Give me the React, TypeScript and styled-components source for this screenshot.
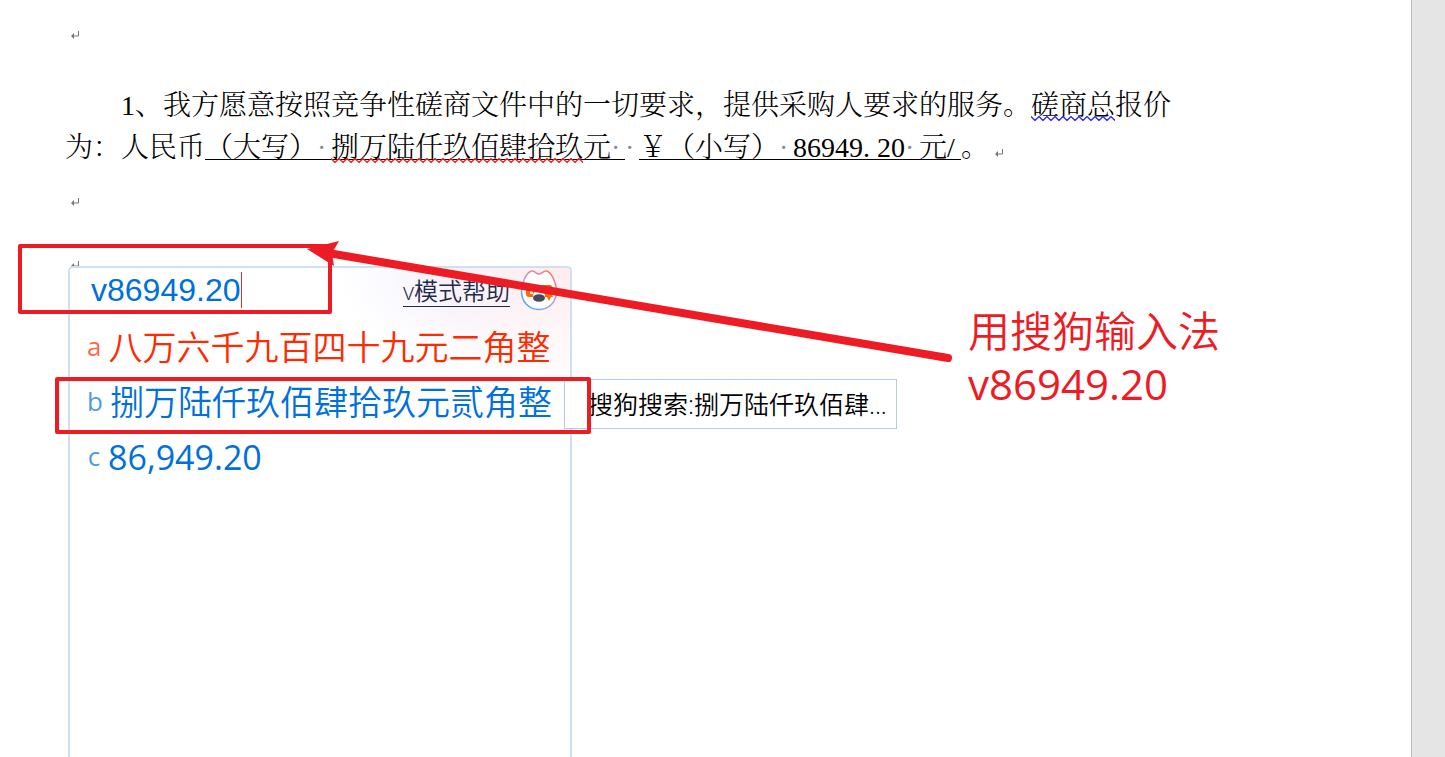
import React from "react";
import styled, { createGlobalStyle } from "styled-components";

const RED = "#ed1c24";
const CJK = '"Noto Sans CJK SC"';

const GlobalStyle = createGlobalStyle`
  * { box-sizing: border-box; }
  body { margin: 0; background: #fff; }
`;

const Workspace = styled.div`
  display: flex;
  min-height: 100vh;
  background: #e5e5e5;
`;

const Page = styled.main`
  position: relative;
  flex: 1;
  min-width: 0;
  margin-right: 33px;
  padding: 9px 0 0 65px;
  overflow: hidden;
  background: #fff;
  border-right: 1px solid #bdbdbd;
`;

const Paragraph = styled.p<{ $gap?: number }>`
  margin: 0 0 ${(p) => p.$gap ?? 0}px;
  color: #000;
  font: 300 28px/42px "Liberation Serif", "Noto Serif CJK SC", ${CJK}, serif;
  white-space: nowrap;
`;

const Line = styled.span<{ $indent?: boolean }>`
  display: block;
  height: 42px;
  padding-left: ${(p) => (p.$indent ? 56 : 0)}px;
`;

const Cell = styled.span<{ $muted?: boolean }>`
  display: inline-block;
  width: 14px;
  color: ${(p) => (p.$muted ? "#8a8a8a" : "inherit")};
`;

const Underlined = styled.span`
  display: inline-block;
  height: 33px;
  line-height: 42px;
  vertical-align: top;
  border-bottom: 1px solid #000;
`;

const Flagged = styled.span`
  position: relative;
`;

const Wave = styled.svg`
  position: absolute;
  left: 0;
  bottom: 0;
  width: 100%;
  height: 5px;
`;

const Mark = styled.svg`
  width: 8px;
  height: 9px;
  margin-left: 6px;
`;

const Composer = styled.section`
  position: absolute;
  top: 266px;
  bottom: 0;
  left: 68px;
  width: 504px;
  padding: 0 12px 0 17px;
  border: 2px solid #cfe0ef;
  border-bottom: 0;
  border-radius: 5px 5px 0 0;
  background:
    radial-gradient(ellipse 180px 120px at 100% 0, #ffecec 0, rgba(255, 238, 240, 0.6) 45%, rgba(255, 255, 255, 0) 100%),
    radial-gradient(ellipse 120px 80px at 78% 10px, #f4f1fd 0, rgba(255, 255, 255, 0) 100%),
    #fff;
`;

const ComposerHead = styled.div`
  display: flex;
  align-items: center;
  height: 44px;
`;

const Code = styled.input`
  width: 150px;
  height: 36px;
  margin-left: 4px;
  padding: 0;
  border: 0;
  outline: 0;
  background: none;
  color: #0070dc;
  font: 32px/36px "Liberation Sans", Arial, sans-serif;
`;

const Caret = styled.span`
  width: 1px;
  height: 36px;
  background: #d8301c;
`;

const Help = styled.a`
  margin-left: auto;
  margin-top: 2px;
  height: 32px;
  border-bottom: 1px solid #1d2b4c;
  color: #1d2b4c;
  font: 350 24px/32px "Open Sans", ${CJK}, sans-serif;
  text-decoration: none;
`;

const Mascot = styled.svg`
  width: 38px;
  height: 42px;
  margin-left: 10px;
`;

const Candidates = styled.ol`
  margin: 8px 0 0;
  padding: 0;
  list-style: none;
`;

const Candidate = styled.button<{ $active?: boolean; $latin?: boolean }>`
  display: flex;
  align-items: center;
  gap: 7px;
  height: 55px;
  padding: 0;
  border: 0;
  background: none;
  color: ${(p) => (p.$active ? "#ff2a00" : "#0070dc")};
  font: ${(p) => (p.$latin ? 400 : 350)} 34px/55px "Open Sans", ${CJK}, sans-serif;
  white-space: nowrap;
`;

const Key = styled.span`
  min-width: 14px;
  font: 400 26px/48px "Open Sans", sans-serif;
  height: 52px;
  opacity: 0.7;
`;

const SearchHint = styled.button`
  position: absolute;
  top: 379px;
  left: 564px;
  height: 50px;
  padding: 0 9px 0 23px;
  border: 1px solid #b5cce4;
  background: #fff;
  color: #000;
  font: 350 25px/48px "Open Sans", ${CJK}, sans-serif;
  white-space: nowrap;
`;

const Frame = styled.div<{ $x: number; $y: number; $w: number; $h: number }>`
  position: absolute;
  left: ${(p) => p.$x}px;
  top: ${(p) => p.$y}px;
  width: ${(p) => p.$w}px;
  height: ${(p) => p.$h}px;
  border: 4px solid ${RED};
  border-radius: 2px;
  pointer-events: none;
`;

const Arrow = styled.svg`
  position: absolute;
  left: 300px;
  top: 236px;
  width: 660px;
  height: 132px;
  pointer-events: none;
`;

const Note = styled.p`
  position: absolute;
  left: 968px;
  top: 304px;
  margin: 0;
  color: ${RED};
  font: 350 42px/53px "Open Sans", ${CJK}, sans-serif;
  white-space: nowrap;
`;

const NoteCode = styled.span`
  font-weight: 400;
`;

const ReturnMark = () => (
  <Mark viewBox="0 0 8 9" aria-hidden="true">
    <path d="M7.500 1V6H2" fill="none" stroke="#777" />
    <path d="M0 6L3 3V9Z" fill="#777" />
  </Mark>
);

const Squiggle = ({ id, color, children }: { id: string; color: string; children: React.ReactNode }) => (
  <Flagged>
    {children}
    <Wave aria-hidden="true">
      <defs>
        <pattern id={id} width="8" height="5" patternUnits="userSpaceOnUse">
          <path d="M-1 1.500L0 0.500L4 4.500L8 0.500L9 1.500" fill="none" stroke={color} strokeWidth="1.300" />
        </pattern>
      </defs>
      <rect width="100%" height="5" fill={`url(#${id})`} />
    </Wave>
  </Flagged>
);

const Space = () => <Cell $muted>·</Cell>;

const MascotIcon = () => (
  <Mascot viewBox="0 0 38 42" role="img" aria-label="搜狗">
    <defs>
      <linearGradient id="rim" x1="0.2" y1="1" x2="0.8" y2="0">
        <stop offset="0" stopColor="#4aa8ff" />
        <stop offset="0.45" stopColor="#b6a2ea" />
        <stop offset="1" stopColor="#ff7668" />
      </linearGradient>
    </defs>
    <path
      d="M19 5C16 5 15 1.500 11.500 2C7 3 2 12 1.600 21.500C1.200 33 9 40.500 19 40.500S36.800 33 36.400 21.500C36 12 31 3 26.500 2C23 1.500 22 5 19 5Z"
      fill="#fff"
      stroke="url(#rim)"
      strokeWidth="1.600"
    />
    <path d="M6 18Q6 16 9 16H30Q32 16 32.500 19L34 23L31.500 25L33 28H31L29 32L27 28H9Q6 28 6 25Z" fill="#ff6a00" />
    <path d="M10 21H13V25H10Z" fill="#fff" />
    <path d="M13 28Q13 21 19 21T25 28Z" fill="#fff" />
    <ellipse cx="19" cy="29" rx="6" ry="3.800" fill="#454a5e" />
  </Mascot>
);

const candidates = [
  { key: "a", text: "八万六千九百四十九元二角整" },
  { key: "b", text: "捌万陆仟玖佰肆拾玖元贰角整" },
  { key: "c", text: "86,949.20", latin: true },
];

export default function App() {
  return (
    <Workspace>
      <GlobalStyle />
      <Page>
        <Paragraph $gap={34}>
          <Line><ReturnMark /></Line>
        </Paragraph>
        <Paragraph $gap={7}>
          <Line $indent>
            1、我方愿意按照竞争性磋商文件中的一切要求，提供采购人要求的服务。
            <Squiggle id="grammar" color="#2626ff">磋商总</Squiggle>报价
          </Line>
          <Line>
            为：人民币
            <Underlined>
              （大写）<Space />
              <Squiggle id="spelling" color="#ff1a1a">捌万陆仟玖佰肆拾玖</Squiggle>元<Space />
            </Underlined>
            <Space />
            <Underlined>
              ￥（小写）<Space />86949<Cell>.</Cell>20<Space />元<Cell>/</Cell>
            </Underlined>
            。<ReturnMark />
          </Line>
        </Paragraph>
        <Paragraph $gap={21}>
          <Line><ReturnMark /></Line>
        </Paragraph>
        <Paragraph>
          <Line><ReturnMark /></Line>
        </Paragraph>

        <Composer>
          <ComposerHead>
            <Code aria-label="输入" defaultValue="v86949.20" />
            <Caret />
            <Help href="#help">v模式帮助</Help>
            <MascotIcon />
          </ComposerHead>
          <Candidates>
            {candidates.map((c, i) => (
              <li key={c.key}>
                <Candidate type="button" $active={i === 0} $latin={c.latin}>
                  <Key>{c.key}</Key>
                  {c.text}
                </Candidate>
              </li>
            ))}
          </Candidates>
        </Composer>

        <SearchHint type="button">搜狗搜索:捌万陆仟玖佰肆...</SearchHint>

        <Frame $x={18} $y={244} $w={314} $h={70} />
        <Frame $x={55} $y={377} $w={536} $h={57} />
        <Arrow viewBox="0 0 660 132" aria-hidden="true">
          <path d="M28 17L648 122" stroke={RED} strokeWidth="8" strokeLinecap="round" />
          <path d="M7 13L39 5L32 17L34 30Z" fill={RED} />
        </Arrow>
        <Note>
          用搜狗输入法
          <br />
          <NoteCode>v86949.20</NoteCode>
        </Note>
      </Page>
    </Workspace>
  );
}
